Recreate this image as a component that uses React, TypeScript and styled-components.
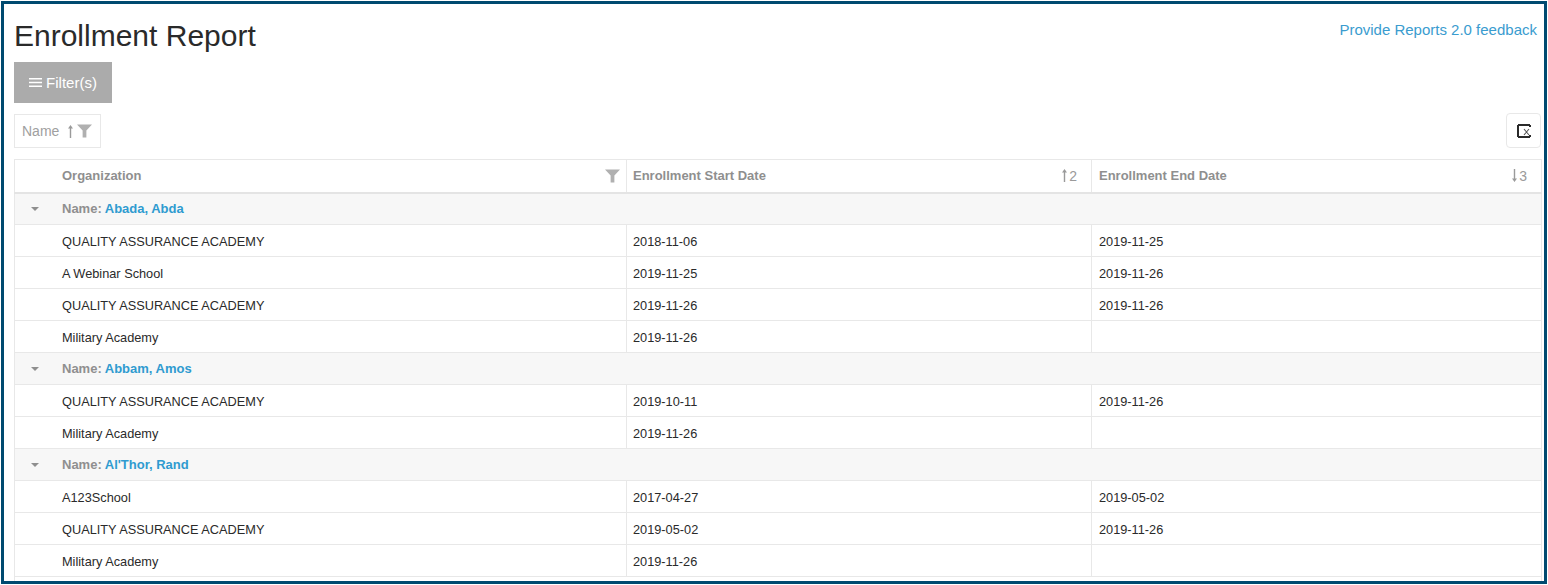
import styled, { createGlobalStyle } from 'styled-components';

const GlobalStyle = createGlobalStyle`
  html, body {
    margin: 0;
    padding: 0;
    background: #fff;
    font-family: "Liberation Sans", Arial, sans-serif;
  }
`;

const Frame = styled.div`
  box-sizing: border-box;
  width: 1546px;
  height: 583px;
  margin: 1px 0 0 1px;
  border: 3px solid #004a70;
  padding: 0 3px 0 10px;
  overflow: hidden;
  background: #fff;
`;

const TopBar = styled.div`
  display: flex;
  justify-content: space-between;
  align-items: flex-start;
  height: 58px;
`;

const Title = styled.h1`
  margin: 14px 0 0;
  font-size: 30px;
  line-height: 36px;
  font-weight: 400;
  color: #2a2a2a;
`;

const FeedbackLink = styled.a`
  margin: 17px 4px 0 0;
  font-size: 15px;
  line-height: 17px;
  color: #3a9ccf;
  text-decoration: none;
`;

const FilterButton = styled.button`
  display: flex;
  align-items: center;
  justify-content: center;
  gap: 4px;
  width: 98px;
  height: 41px;
  padding: 0;
  border: 0;
  background: #ababab;
  color: #fff;
  font: 15px "Liberation Sans", Arial, sans-serif;
`;

const Toolbar = styled.div`
  display: flex;
  justify-content: space-between;
  align-items: flex-start;
  height: 45px;
  margin-top: 10px;
  margin-bottom: 1px;
`;

const GroupChip = styled.div`
  box-sizing: border-box;
  display: flex;
  align-items: center;
  width: 87px;
  height: 34px;
  margin-top: 1px;
  padding-left: 7px;
  border: 1px solid #e8e8e8;
  color: #a0a0a0;
  font-size: 14px;
`;

const ChipLabel = styled.span`
  margin-right: 8px;
`;

const ChipFunnel = styled.span`
  display: flex;
  margin-left: 3px;
`;

const ExportButton = styled.button`
  box-sizing: border-box;
  display: flex;
  align-items: center;
  justify-content: center;
  width: 35px;
  height: 35px;
  padding: 0;
  background: #fff;
  border: 1px solid #e8e8e8;
  border-radius: 4px;
`;

const Table = styled.table`
  width: 1527px;
  table-layout: fixed;
  border-collapse: collapse;
  font-size: 12.75px;
  color: #2a2a2a;
`;

const HeadCell = styled.th<{ $inset?: number }>`
  box-sizing: border-box;
  height: 33px;
  padding: 0 14px 0 ${(p) => p.$inset ?? 7}px;
  border: 1px solid #e8e8e8;
  border-bottom: 2px solid #e4e4e4;
  color: #8f8f8f;
  font-weight: 700;
  font-size: 13px;
  text-align: left;
`;

const HeadInner = styled.div`
  display: flex;
  align-items: center;
  justify-content: space-between;
`;

const OrgHead = styled(HeadCell)`
  padding-left: 47px;
  padding-right: 6px;
`;

const SortMark = styled.span`
  display: flex;
  align-items: center;
  gap: 1px;
  color: #9a9a9a;
  font-weight: 400;
  font-size: 14px;
`;

const GroupCell = styled.td`
  box-sizing: border-box;
  height: 32px;
  padding: 0;
  border: 1px solid #e8e8e8;
  background: #f7f7f7;
  color: #8f8f8f;
  font-size: 13px;
  font-weight: 700;
`;

const GroupInner = styled.div`
  display: flex;
  align-items: center;
`;

const Caret = styled.span`
  width: 0;
  height: 0;
  margin: 1px 23px 0 16px;
  border-left: 4px solid transparent;
  border-right: 4px solid transparent;
  border-top: 4px solid #8f8f8f;
`;

const GroupName = styled.a`
  margin-left: 3px;
  color: #2f9bd0;
`;

const Cell = styled.td<{ $inset?: number }>`
  box-sizing: border-box;
  height: 32px;
  padding: 2px 7px 0 ${(p) => p.$inset ?? 6}px;
  border: 1px solid #e8e8e8;
`;

const OrgCell = styled(Cell)`
  padding-left: 47px;
`;

const FunnelIcon = () => (
  <svg width="15" height="14" viewBox="0 0 16 14">
    <path d="M0 0h16L10 6.5V14H6V6.5z" fill="#b0b0b0" />
  </svg>
);

const ArrowIcon = ({ down }: { down?: boolean }) => (
  <svg width="7" height="15" viewBox="0 0 7 15">
    <g transform={down ? 'rotate(180 3.5 7.5)' : undefined}>
      <path d="M3.5 1L6 4.5H4.2V14H2.8V4.5H1z" fill="#9a9a9a" />
    </g>
  </svg>
);

const MenuIcon = () => (
  <svg width="13" height="11" viewBox="0 0 13 11">
    <path d="M0 1h13v1.6H0zM0 4.7h13v1.6H0zM0 8.4h13V10H0z" fill="#fff" />
  </svg>
);

const ExcelIcon = () => (
  <svg width="14" height="14" viewBox="0 0 14 14">
    <path d="M1 1h12M1 13h12M1 1v12M13 1v2M13 11v2" stroke="#2a2a2a" strokeWidth="2" fill="none" />
    <path d="M7 5l5 6M12 5l-5 6" stroke="#555" strokeWidth="1.1" fill="none" />
  </svg>
);

const groups = [
  {
    name: 'Abada, Abda',
    rows: [
      ['QUALITY ASSURANCE ACADEMY', '2018-11-06', '2019-11-25'],
      ['A Webinar School', '2019-11-25', '2019-11-26'],
      ['QUALITY ASSURANCE ACADEMY', '2019-11-26', '2019-11-26'],
      ['Military Academy', '2019-11-26', ''],
    ],
  },
  {
    name: 'Abbam, Amos',
    rows: [
      ['QUALITY ASSURANCE ACADEMY', '2019-10-11', '2019-11-26'],
      ['Military Academy', '2019-11-26', ''],
    ],
  },
  {
    name: "Al'Thor, Rand",
    rows: [
      ['A123School', '2017-04-27', '2019-05-02'],
      ['QUALITY ASSURANCE ACADEMY', '2019-05-02', '2019-11-26'],
      ['Military Academy', '2019-11-26', ''],
    ],
  },
];

export default function App() {
  return (
    <>
      <GlobalStyle />
      <Frame>
        <TopBar>
          <Title>Enrollment Report</Title>
          <FeedbackLink>Provide Reports 2.0 feedback</FeedbackLink>
        </TopBar>
        <FilterButton>
          <MenuIcon />
          Filter(s)
        </FilterButton>
        <Toolbar>
          <GroupChip>
            <ChipLabel>Name</ChipLabel>
            <ArrowIcon />
            <ChipFunnel>
              <FunnelIcon />
            </ChipFunnel>
          </GroupChip>
          <ExportButton aria-label="Export">
            <ExcelIcon />
          </ExportButton>
        </Toolbar>
        <Table>
          <colgroup>
            <col style={{ width: 612 }} />
            <col style={{ width: 465 }} />
            <col style={{ width: 450 }} />
          </colgroup>
          <thead>
            <tr>
              <OrgHead>
                <HeadInner>
                  Organization
                  <FunnelIcon />
                </HeadInner>
              </OrgHead>
              <HeadCell $inset={6}>
                <HeadInner>
                  Enrollment Start Date
                  <SortMark>
                    <ArrowIcon />2
                  </SortMark>
                </HeadInner>
              </HeadCell>
              <HeadCell>
                <HeadInner>
                  Enrollment End Date
                  <SortMark>
                    <ArrowIcon down />3
                  </SortMark>
                </HeadInner>
              </HeadCell>
            </tr>
          </thead>
          <tbody>
            {groups.map((group) => (
              <>
                <tr key={group.name}>
                  <GroupCell colSpan={3}>
                    <GroupInner>
                      <Caret />
                      Name:
                      <GroupName>{group.name}</GroupName>
                    </GroupInner>
                  </GroupCell>
                </tr>
                {group.rows.map((row, i) => (
                  <tr key={group.name + i}>
                    <OrgCell>{row[0]}</OrgCell>
                    <Cell>{row[1]}</Cell>
                    <Cell $inset={7}>{row[2]}</Cell>
                  </tr>
                ))}
              </>
            ))}
            <tr>
              <Cell colSpan={3} />
            </tr>
          </tbody>
        </Table>
      </Frame>
    </>
  );
}
